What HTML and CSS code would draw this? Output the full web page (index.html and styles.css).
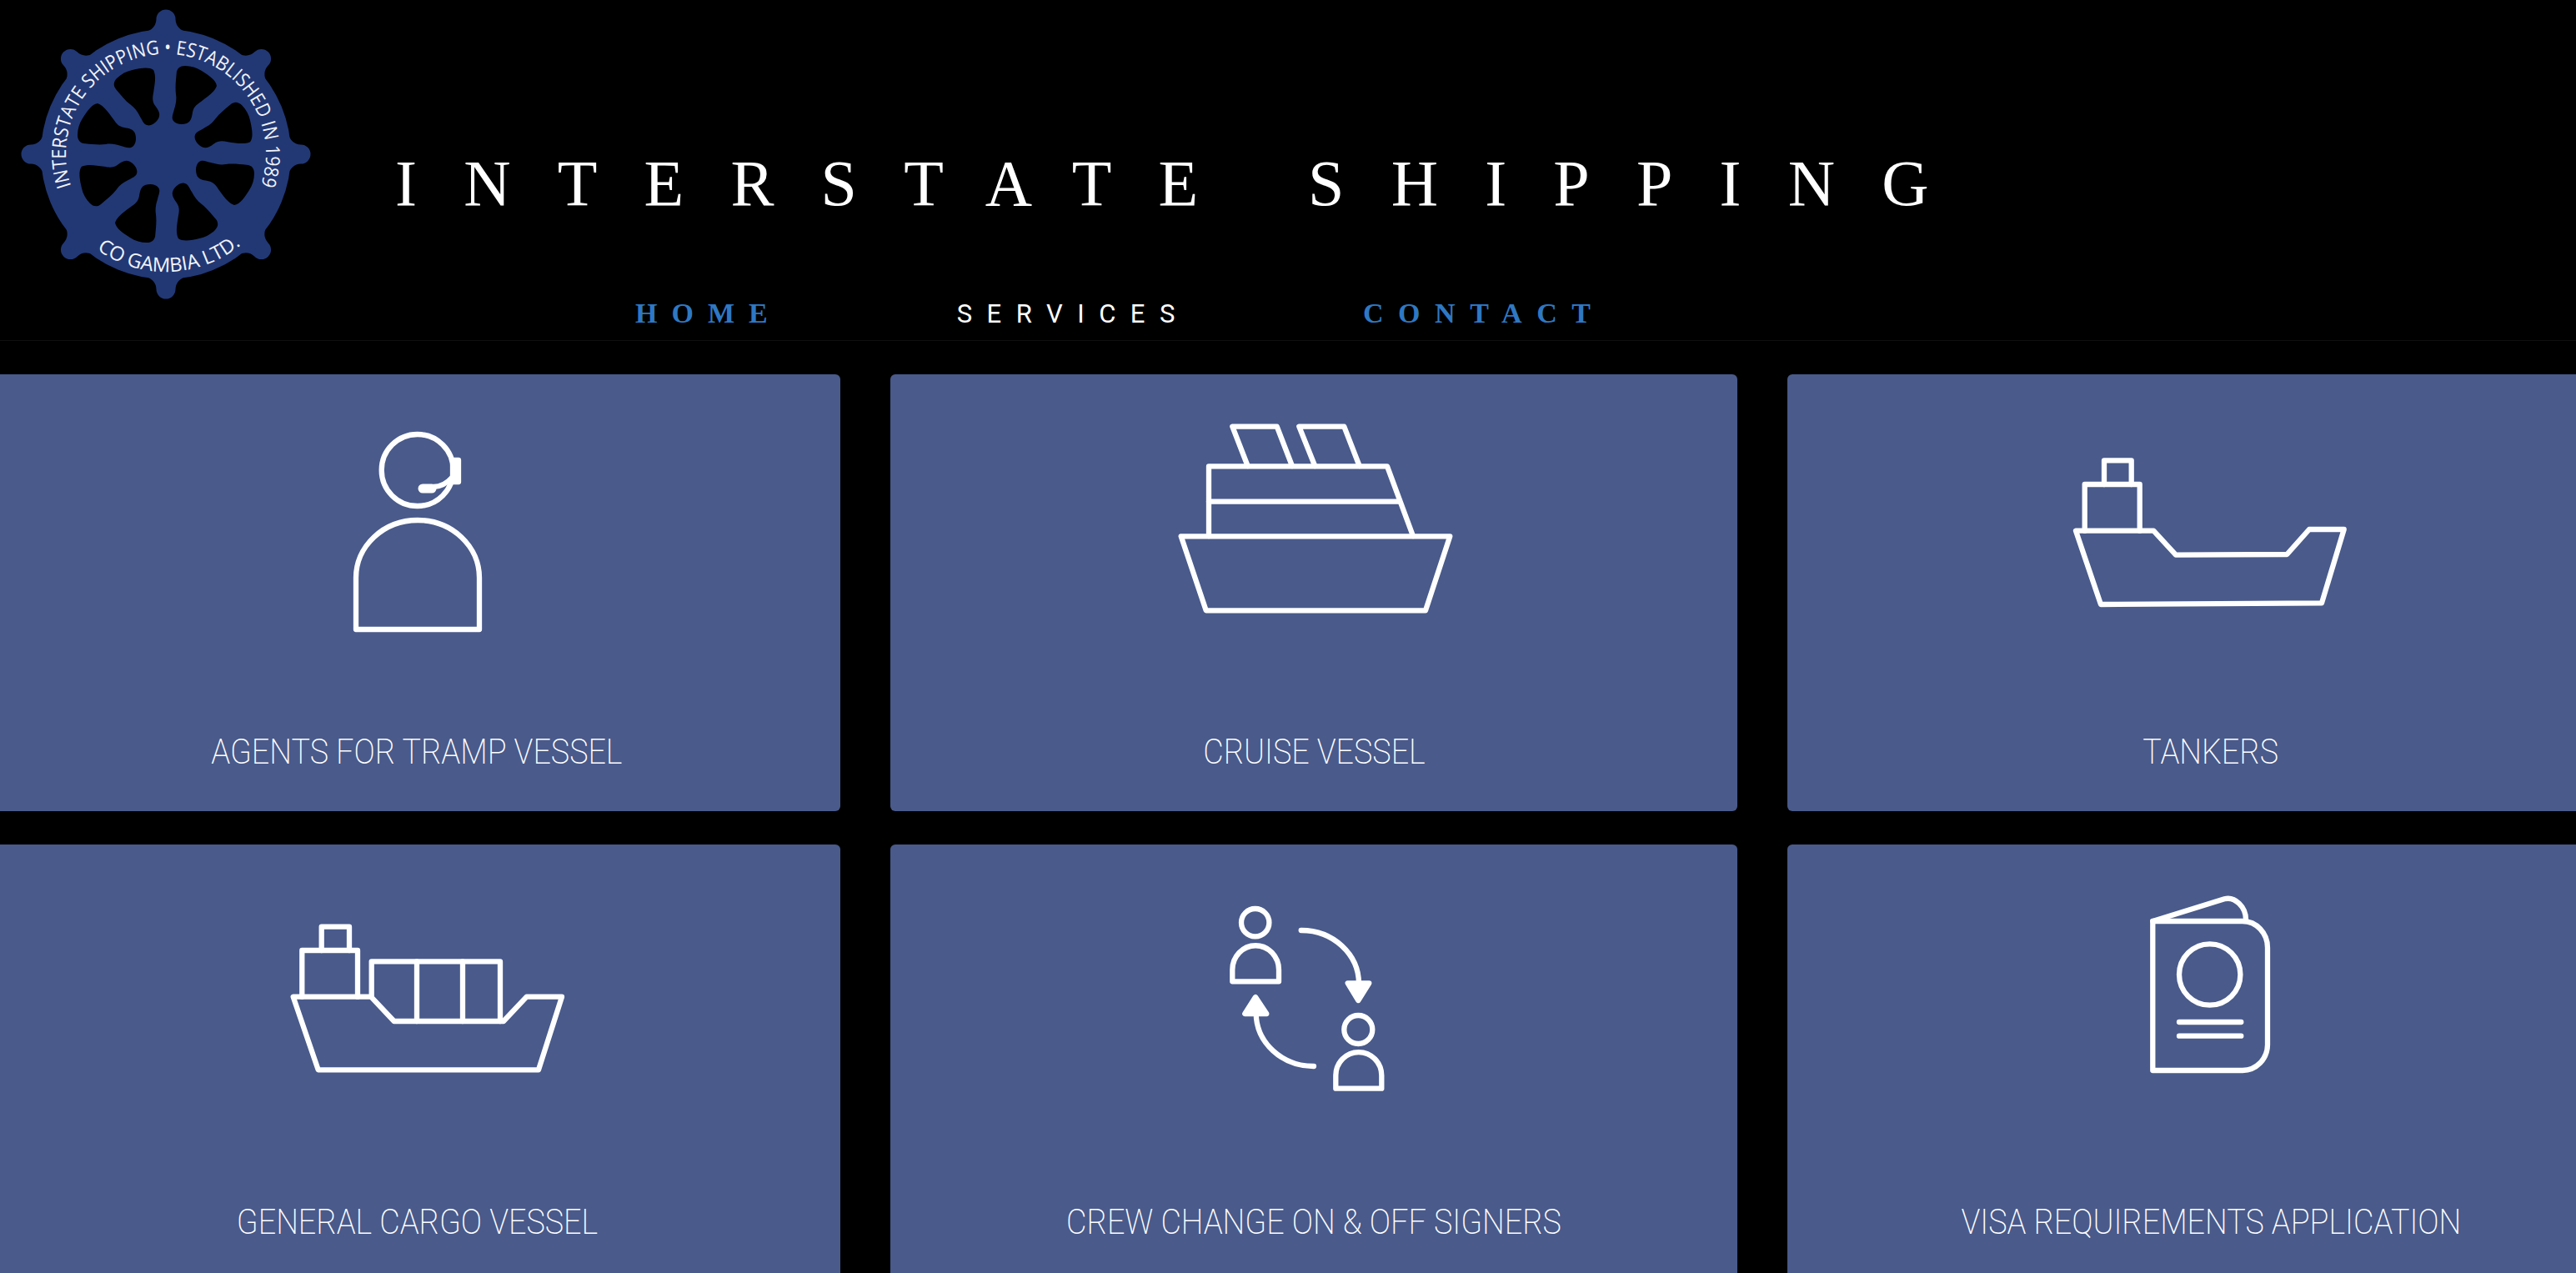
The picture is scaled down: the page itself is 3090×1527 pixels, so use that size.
FILE: index.html
```html
<!DOCTYPE html>
<html lang="en">
<head>
<meta charset="utf-8">
<title>Interstate Shipping</title>
<link rel="stylesheet" href="styles.css">
</head>
<body>
<header class="site-header">
  <svg class="logo" viewBox="0 0 400 380" aria-label="Interstate Shipping logo">
    <defs>
      <path id="handle" d="M-26 -146Q-12 -150 -11.500 -162A11.500 11.500 0 0 1 11.500 -162Q12 -150 26 -146Z"/>
      <path id="hole" d="M12.700 -96.700C13 -103 17 -106 23 -106C30 -106 37 -104 43 -100C51 -95 60 -89 61 -82C58 -74 50 -69 42 -63C36 -59 33 -56 32 -50C31 -44 30 -39 25 -37C19 -35 12 -36 9 -40C6 -44 9 -49 10 -54C12 -60 13 -66 12 -72C11 -80 12 -89 12.700 -96.700Z"/>
      <path id="arc-top" d="M85.300 223.300A120 120 0 1 1 312 225.200"/>
      <path id="arc-bottom" d="M116.100 299.100A141 141 0 0 0 291.500 291.400"/>
    </defs>
    <g class="wheel">
      <g transform="translate(199 185)">
        <circle r="150"/>
        <use href="#handle"/>
        <use href="#handle" transform="rotate(45)"/>
        <use href="#handle" transform="rotate(90)"/>
        <use href="#handle" transform="rotate(135)"/>
        <use href="#handle" transform="rotate(180)"/>
        <use href="#handle" transform="rotate(225)"/>
        <use href="#handle" transform="rotate(270)"/>
        <use href="#handle" transform="rotate(315)"/>
      </g>
    </g>
    <g class="wheel-holes" transform="translate(199 185)">
      <use href="#hole"/>
      <use href="#hole" transform="rotate(45)"/>
      <use href="#hole" transform="rotate(90)"/>
      <use href="#hole" transform="rotate(135)"/>
      <use href="#hole" transform="rotate(180)"/>
      <use href="#hole" transform="rotate(225)"/>
      <use href="#hole" transform="rotate(270)"/>
      <use href="#hole" transform="rotate(315)"/>
    </g>
    <text class="logo-text"><textPath href="#arc-top" textLength="454" lengthAdjust="spacingAndGlyphs">INTERSTATE SHIPPING • ESTABLISHED IN 1989</textPath></text>
    <text class="logo-text"><textPath href="#arc-bottom" textLength="186" lengthAdjust="spacingAndGlyphs">CO GAMBIA LTD.</textPath></text>
  </svg>
  <div class="brand">
    <h1 class="title">INTERSTATE SHIPPING</h1>
    <nav class="nav">
      <a class="nav-link nav-home">HOME</a>
      <a class="nav-link nav-services">SERVICES</a>
      <a class="nav-link nav-contact">CONTACT</a>
    </nav>
  </div>
</header>

<main class="grid">
  <article class="card">
    <svg class="icon" viewBox="0 0 400 300">
      <circle cx="200.700" cy="95" r="43"/>
      <path d="M127 286V224A74 69 0 0 1 275 224V286Z"/>
      <path class="solid" d="M243 83H250V109H243Z"/>
      <path d="M242 104Q232 115 220 115"/>
      <path class="thick" d="M207 117H218"/>
    </svg>
    <h2 class="label"><span class="label-text">AGENTS FOR TRAMP VESSEL</span></h2>
  </article>
  <article class="card">
    <svg class="icon" viewBox="0 0 400 300">
      <path d="M40.700 174.300H363.300L334 263.300H70.700Z"/>
      <path d="M74 174V90.300H288L319 174"/>
      <path d="M74 132.700H301.700"/>
      <path d="M120.700 90L102.300 42.700H155.700L174 90"/>
      <path d="M201.300 90L182.300 42.700H236.300L254.700 90"/>
    </svg>
    <h2 class="label"><span class="label-text">CRUISE VESSEL</span></h2>
  </article>
  <article class="card">
    <svg class="icon" viewBox="0 0 400 300">
      <path d="M38 167.700H131.300L158 196.700L291.300 196L318 166H359.700L333 254.300L68 256Z"/>
      <path d="M48.700 167.700V112H114.700V167.700"/>
      <path d="M72 112V83.300H104.700V112"/>
    </svg>
    <h2 class="label"><span class="label-text">TANKERS</span></h2>
  </article>
  <article class="card">
    <svg class="icon" viewBox="0 0 400 300">
      <path d="M51.700 162.700H145L172.700 192H304L331.700 162.700H374L346 250.300H81.700Z"/>
      <path d="M62.300 162.700V107H129V162.700"/>
      <path d="M85.700 107V78.700H119V107"/>
      <path d="M145.700 162.700V120.300H300V192"/>
      <path d="M200 120.300V192M255 120.300V192"/>
    </svg>
    <h2 class="label"><span class="label-text">GENERAL CARGO VESSEL</span></h2>
  </article>
  <article class="card">
    <svg class="icon" viewBox="0 0 400 300">
      <circle cx="129.700" cy="73.700" r="16.700"/>
      <path d="M102.300 144.300V130.300A27.800 29 0 0 1 158 130.300V144.300Z"/>
      <circle cx="253.300" cy="202" r="17"/>
      <path d="M226.300 272.700V257A27.500 28 0 0 1 281.300 257V272.700Z"/>
      <path d="M184.700 83A69 64 0 0 1 254 147"/>
      <path class="solid" d="M240.700 146.300H266.300L253.300 167Z"/>
      <path d="M200 246A69 64 0 0 1 130.700 182"/>
      <path class="solid" d="M117.300 183H143.300L130 163Z"/>
    </svg>
    <h2 class="label"><span class="label-text">CREW CHANGE ON &amp; OFF SIGNERS</span></h2>
  </article>
  <article class="card">
    <svg class="icon" viewBox="0 0 400 300">
      <path d="M130.300 72V251H238A30 31 0 0 0 268 220.300V103.700A30 31.700 0 0 0 238 72Z"/>
      <path d="M130.300 72L216.300 45.300C229 42 242 55 242 70"/>
      <circle cx="198.700" cy="136" r="36.700"/>
      <path d="M162 193H236.300M162 209.700H236.300"/>
    </svg>
    <h2 class="label"><span class="label-text">VISA REQUIREMENTS APPLICATION</span></h2>
  </article>
</main>
</body>
</html>
```

FILE: styles.css
```css
html, body {
  margin: 0;
  padding: 0;
  height: 100%;
  overflow: hidden;
  background: #000;
}

.site-header {
  display: flex;
  box-sizing: border-box;
  height: 409px;
  border-bottom: 1px solid #0f0f0f;
}

.logo {
  flex: none;
  width: 400px;
  height: 380px;
}

.wheel {
  fill: #223875;
}

.wheel-holes {
  fill: #000;
}

.logo-text {
  font-family: "Open Sans", sans-serif;
  font-size: 23.500px;
  fill: #f2f4f8;
}

.brand {
  margin-left: 74px;
  display: flex;
  flex-direction: column;
}

.title {
  margin: 175px 0 0;
  font-family: "Liberation Serif", serif;
  font-size: 78px;
  line-height: 90px;
  font-weight: 400;
  letter-spacing: 56.200px;
  color: #fff;
  white-space: nowrap;
}

.nav {
  display: flex;
  align-items: baseline;
  margin: 91px 0 0 288px;
}

.nav-link {
  font-size: 34px;
  line-height: 40px;
  white-space: nowrap;
}

.nav-home {
  font-family: "Liberation Serif", serif;
  font-weight: 700;
  letter-spacing: 17px;
  color: #2e78c4;
  margin-right: 210px;
}

.nav-services {
  font-family: Roboto, sans-serif;
  font-size: 31px;
  font-weight: 400;
  letter-spacing: 17.500px;
  color: #fff;
  margin-right: 208px;
}

.nav-contact {
  font-family: "Liberation Serif", serif;
  font-weight: 700;
  letter-spacing: 17.600px;
  color: #2e78c4;
}

.grid {
  display: grid;
  grid-template-columns: repeat(3, 1016px);
  grid-auto-rows: 524px;
  gap: 40px 60px;
  margin: 40px 0 0 -8px;
}

.card {
  display: flex;
  flex-direction: column;
  align-items: center;
  background: #495a8b;
  border-radius: 6px;
  padding-top: 20px;
}

.icon {
  flex: none;
  width: 400px;
  height: 300px;
  fill: none;
  stroke: #fff;
  stroke-width: 6.300px;
  stroke-linejoin: round;
  stroke-linecap: round;
}

.icon .solid {
  fill: #fff;
}

.icon .thick {
  stroke-width: 11px;
}

.label {
  margin: 103px 0 0;
  font-family: Roboto, sans-serif;
  font-size: 42px;
  line-height: 60px;
  font-weight: 200;
  color: #fff;
  white-space: nowrap;
}

.label-text {
  display: inline-block;
  transform: scaleX(0.897);
}
```
